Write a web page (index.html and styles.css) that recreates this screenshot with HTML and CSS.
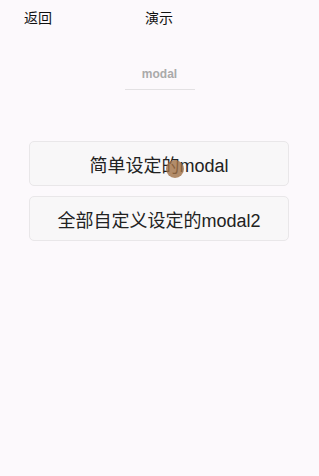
FILE: index.html
```html
<!DOCTYPE html>
<html lang="zh">
<head>
    <meta charset="UTF-8">
    <meta name="viewport" content="width=device-width, initial-scale=1.0">
    <title>演示</title>
    <link rel="stylesheet" href="styles.css">
</head>
<body>
    <div class="header">
        <span class="back">返回</span>
        <span class="title">演示</span>
    </div>

    <div class="tabs">
        <div class="tab">modal</div>
    </div>

    <div class="list">
        <button class="btn">简单设定的modal<span class="touch"></span></button>
        <button class="btn">全部自定义设定的modal2</button>
    </div>
</body>
</html>
```

FILE: styles.css
```css
* {
    margin: 0;
    padding: 0;
    box-sizing: border-box;
}

body {
    font-family: 'Liberation Sans', Arial, 'Noto Sans CJK SC', sans-serif;
    background: #fcf9fc;
    color: #111;
    height: 100vh;
}

.header {
    height: 34px;
    display: flex;
    align-items: center;
    font-size: 14px;
    padding-left: 24px;
}

.header .back {
    width: 121px;
}

.tabs {
    display: flex;
    justify-content: center;
    margin-top: 33px;
}

.tab {
    width: 70px;
    text-align: center;
    font-size: 12px;
    font-weight: bold;
    color: #aaa;
    padding-bottom: 8px;
    border-bottom: 1px solid #e3e1e3;
}

.list {
    display: flex;
    flex-direction: column;
    gap: 10px;
    padding-left: 29px;
    margin-top: 51px;
}

.btn {
    position: relative;
    width: 260px;
    height: 45px;
    border: 1px solid #e9e7e9;
    border-radius: 5px;
    background: #f8f7f8;
    font-family: inherit;
    font-size: 18px;
    color: #222;
    cursor: pointer;
}

.touch {
    position: absolute;
    left: 136px;
    top: 18px;
    width: 18px;
    height: 18px;
    border-radius: 50%;
    background: rgba(160, 112, 70, 0.8);
}
```
